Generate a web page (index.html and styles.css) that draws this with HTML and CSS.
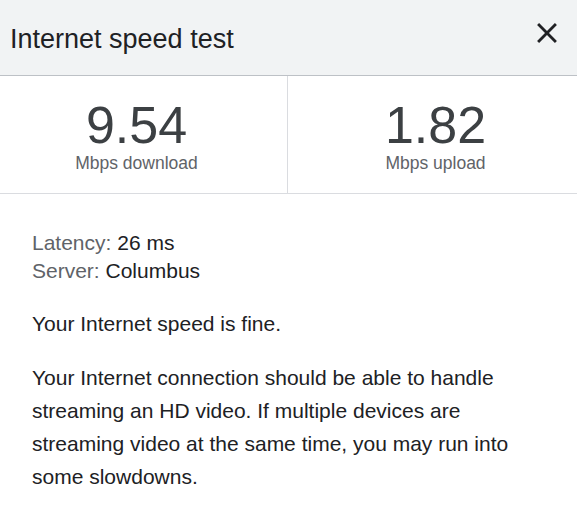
FILE: index.html
```html
<!DOCTYPE html>
<html lang="en">
<head>
<meta charset="utf-8">
<title>Internet speed test</title>
<link rel="stylesheet" href="styles.css">
</head>
<body>
<div class="panel">
  <header class="head">
    <h1 class="title">Internet speed test</h1>
    <button class="close" aria-label="Close">
      <svg viewBox="0 0 24 24" width="34" height="34"><path d="M19 6.41L17.59 5 12 10.59 6.41 5 5 6.41 10.59 12 5 17.59 6.41 19 12 13.41 17.59 19 19 17.59 13.41 12z" fill="#202124"/></svg>
    </button>
  </header>
  <section class="stats">
    <div class="stat stat-down">
      <div class="num">9.54</div>
      <div class="unit">Mbps download</div>
    </div>
    <div class="stat stat-up">
      <div class="num">1.82</div>
      <div class="unit">Mbps upload</div>
    </div>
  </section>
  <section class="details">
    <div class="meta">
      <div><span class="label">Latency:</span> 26 ms</div>
      <div><span class="label">Server:</span> Columbus</div>
    </div>
    <p class="verdict">Your Internet speed is fine.</p>
    <p class="explain">Your Internet connection should be able to handle streaming an HD video. If multiple devices are streaming video at the same time, you may run into some slowdowns.</p>
  </section>
</div>
</body>
</html>
```
FILE: styles.css
```css
* { box-sizing: border-box; }
html, body { margin: 0; padding: 0; background: #fff; }
body {
  font-family: "Liberation Sans", Arial, sans-serif;
  color: #202124;
  width: 577px;
  height: 508px;
  overflow: hidden;
}
.head {
  display: flex;
  justify-content: space-between;
  align-items: flex-start;
  height: 76px;
  padding: 16px 13px 0 10px;
  background: #f1f3f4;
  border-bottom: 1px solid #bdc1c6;
}
.title {
  margin: 8px 0 0;
  font-size: 27px;
  font-weight: normal;
  line-height: 30px;
  color: #202124;
}
.close {
  border: 0;
  padding: 0;
  margin: 0;
  background: none;
  width: 34px;
  height: 34px;
  display: block;
}
.close svg { display: block; }
.stats {
  display: grid;
  grid-template-columns: 288px 1fr;
  border-bottom: 1px solid #dadce0;
}
.stat {
  display: flex;
  flex-direction: column;
  align-items: center;
  padding: 23px 0 20px;
}
.stat-down {
  border-right: 1px solid #dadce0;
  padding-right: 14px;
}
.stat-up { padding-left: 6px; }
.num {
  font-size: 52px;
  line-height: 52px;
  color: #3c4043;
}
.unit {
  margin-top: 2px;
  font-size: 17.5px;
  line-height: 20px;
  color: #5f6368;
}
.details {
  padding: 35px 32px 0 32px;
  font-size: 21px;
}
.meta { line-height: 28px; }
.label { color: #5f6368; }
.verdict {
  margin: 22px 0 0;
  line-height: 33px;
}
.explain {
  margin: 21px 0 0;
  line-height: 33px;
}
```
